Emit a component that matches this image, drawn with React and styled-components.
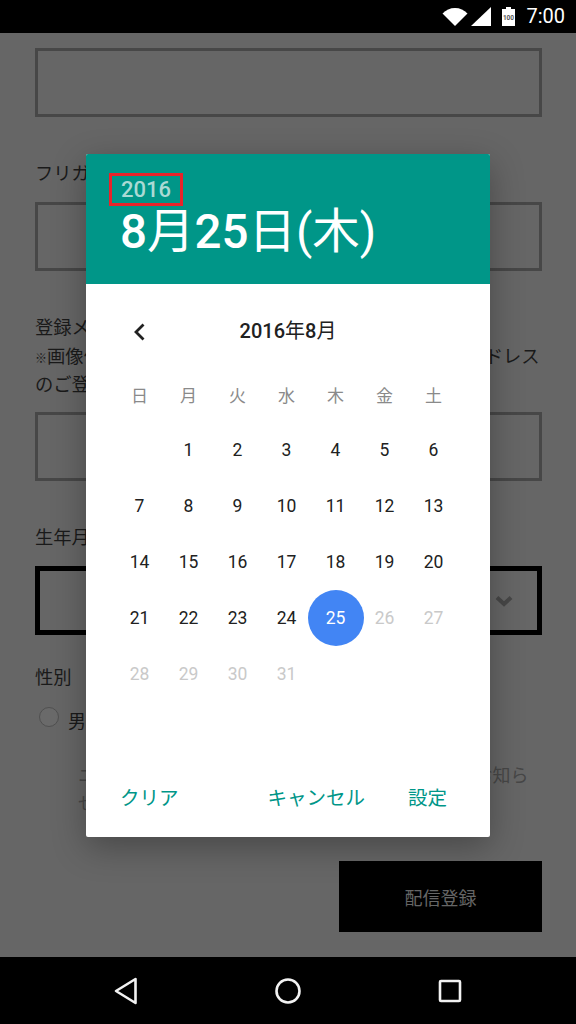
import React from 'react';
import styled, { createGlobalStyle } from 'styled-components';

const GlobalStyle = createGlobalStyle`
  html, body { margin: 0; padding: 0; background: #666; }
  body { font-family: Roboto, "Noto Sans CJK JP", sans-serif; }
`;

const Screen = styled.div`
  position: relative;
  width: 576px;
  height: 1024px;
  display: flex;
  flex-direction: column;
  overflow: hidden;
  background: #666;
`;

const StatusBar = styled.div`
  height: 33px;
  background: #000;
  display: flex;
  align-items: center;
  justify-content: flex-end;
  padding-right: 11px;
  color: #fff;
  flex: none;
`;

const StatusIcon = styled.svg`
  margin-left: ${p => p.$left || 0}px;
`;

const Clock = styled.span`
  font-size: 20px;
  margin-left: 11px;
  line-height: 33px;
`;

const Form = styled.div`
  flex: 1;
  padding: 15px 34px 0 35px;
  position: relative;
`;

const Field = styled.div`
  height: ${p => (p.$strong ? 59 : 63)}px;
  border: ${p => (p.$strong ? '5px solid #000' : '3px solid #474747')};
  margin-bottom: ${p => p.$gap}px;
  display: flex;
  align-items: center;
  justify-content: flex-end;
  padding-right: 24px;
`;

const Label = styled.div`
  font-size: 18.3px;
  line-height: 28.5px;
  height: 28.5px;
  color: #1a1a1a;
  white-space: nowrap;
  margin-bottom: ${p => p.$gap || 0}px;
`;

const NoteMark = styled.span`
  font-size: 12px;
  line-height: 0;
`;

const RadioRow = styled.div`
  display: flex;
  align-items: flex-start;
  margin: 14.5px 0 0 4px;
  height: 55px;
`;

const Radio = styled.span`
  width: 18px;
  height: 18px;
  border-radius: 50%;
  border: 1px solid #505050;
  background: #6a6a6a;
  margin-right: 9px;
`;

const RadioText = styled.span`
  font-size: 18px;
  line-height: 28px;
  margin-top: 1px;
  color: #1a1a1a;
`;

const Notice = styled.div`
  font-size: 18px;
  line-height: 28px;
  letter-spacing: 0.1px;
  color: #474747;
  margin-left: 43px;
  white-space: nowrap;
`;

const SubmitRow = styled.div`
  display: flex;
  justify-content: flex-end;
  margin-top: 43px;
`;

const Submit = styled.div`
  width: 203px;
  height: 71px;
  background: #000;
  color: #666;
  font-size: 18px;
  display: flex;
  align-items: center;
  justify-content: center;
`;

const NavBar = styled.div`
  height: 67px;
  flex: none;
  background: #000;
  display: flex;
  align-items: center;
  padding-left: 113px;
  gap: 136px;
`;

const Dialog = styled.div`
  position: absolute;
  left: 86px;
  top: 154px;
  width: 404px;
  height: 683px;
  background: #fff;
  border-radius: 2px;
  box-shadow: 0 10px 34px rgba(0, 0, 0, 0.3);
  display: flex;
  flex-direction: column;
  overflow: hidden;
`;

const DialogHeader = styled.div`
  height: 130px;
  flex: none;
  background: #009688;
  padding: 19px 0 0 23px;
  box-sizing: border-box;
`;

const YearBox = styled.div`
  width: 74px;
  height: 33px;
  box-sizing: border-box;
  border: 3px solid #e8232a;
  padding-left: 9px;
  color: #aadad4;
  font-size: 22px;
  font-weight: 500;
  line-height: 27px;
`;

const BigDate = styled.div`
  color: #fff;
  font-size: 47.5px;
  line-height: 52px;
  margin: 0 0 0 11px;
  white-space: nowrap;
`;

const Digits = styled.span`
  font-weight: 500;
`;

const MonthRow = styled.div`
  position: relative;
  height: 94px;
  flex: none;
  display: flex;
  justify-content: center;
  padding-top: 33px;
  box-sizing: border-box;
  font-size: 20px;
  line-height: 28px;
  color: #212121;
`;

const PrevButton = styled.span`
  position: absolute;
  left: 46px;
  top: 38px;
  display: flex;
`;

const Weekdays = styled.div`
  display: grid;
  grid-template-columns: repeat(7, 49px);
  padding-left: 29px;
  height: 44px;
  flex: none;
`;

const Weekday = styled.div`
  text-align: center;
  font-size: 17px;
  line-height: 36px;
  color: #8a8a8a;
`;

const Days = styled.div`
  display: grid;
  grid-template-columns: repeat(7, 49px);
  grid-auto-rows: 56px;
  padding-left: 29px;
  flex: none;
`;

const Day = styled.div`
  position: relative;
  display: flex;
  align-items: center;
  justify-content: center;
  font-size: 17.5px;
  color: ${p => (p.$selected ? '#fff' : p.$disabled ? '#c9c9c9' : '#212121')};
  &::before {
    content: '';
    display: ${p => (p.$selected ? 'block' : 'none')};
    position: absolute;
    left: -3.5px;
    top: 0;
    width: 56px;
    height: 56px;
    border-radius: 50%;
    background: #4285f4;
  }
`;

const DayNum = styled.span`
  position: relative;
`;

const Actions = styled.div`
  margin-top: auto;
  height: 58px;
  flex: none;
  display: flex;
  padding: 0 43px 0 34px;
  box-sizing: border-box;
  align-items: flex-start;
  font-size: 19.5px;
  line-height: 40px;
  color: #009688;
  white-space: nowrap;
`;

const ActionSpacer = styled.span`
  flex: 1;
`;

const ActionGap = styled.span`
  width: 43px;
`;

const SquareIcon = styled.svg`
  margin-left: 1px;
`;

const lastEnabled = 25;
const cells = [null];
for (let d = 1; d <= 31; d++) cells.push(d);

const weekdays = ['日', '月', '火', '水', '木', '金', '土'];

export default function App() {
  return (
    <Screen>
      <GlobalStyle />
      <StatusBar>
        <StatusIcon width="26" height="19" viewBox="0 0 26 19">
          <path d="M0.5 6.5C4 3 8 1 13 1s9 2 12.5 5.5L13 19z" fill="#fff" />
        </StatusIcon>
        <StatusIcon $left={3} width="20" height="19" viewBox="0 0 20 19">
          <path d="M20 0v19H0z" fill="#fff" />
        </StatusIcon>
        <StatusIcon $left={11} width="13" height="19" viewBox="0 0 13 19">
          <path d="M4 0h5v2h4v17H0V2h4z" fill="#fff" />
          <text x="6.5" y="12.5" fontSize="6.5" fontWeight="700" textAnchor="middle" fill="#555" fontFamily="Roboto">100</text>
        </StatusIcon>
        <Clock>7:00</Clock>
      </StatusBar>

      <Form>
        <Field $gap={43} />
        <Label $gap={13.5}>フリガナ</Label>
        <Field $gap={43} />
        <Label>登録メールアドレス</Label>
        <Label><NoteMark>※</NoteMark>画像付きメールを受信可能なスマートフォンメールアドレス</Label>
        <Label $gap={12.5}>のご登録をお願いします</Label>
        <Field $gap={43} />
        <Label $gap={13.5}>生年月日</Label>
        <Field $strong $gap={29}>
          <svg width="18" height="12" viewBox="0 0 18 12">
            <path d="M2 2.5l7 6.5 7-6.5" fill="none" stroke="#474747" strokeWidth="4" />
          </svg>
        </Field>
        <Label>性別</Label>
        <RadioRow>
          <Radio />
          <RadioText>男性</RadioText>
        </RadioRow>
        <Notice>ニュースレターや最新のキャンペーン情報などのお知ら</Notice>
        <Notice>せを受け取る</Notice>
        <SubmitRow>
          <Submit>配信登録</Submit>
        </SubmitRow>
      </Form>

      <NavBar>
        <svg width="26" height="28" viewBox="0 0 26 28">
          <path d="M22.5 2v24L3 14z" fill="none" stroke="#f2f2f2" strokeWidth="2.6" strokeLinejoin="round" />
        </svg>
        <svg width="26" height="26" viewBox="0 0 26 26">
          <circle cx="13" cy="13" r="11.5" fill="none" stroke="#f2f2f2" strokeWidth="2.6" />
        </svg>
        <SquareIcon width="24" height="24" viewBox="0 0 24 24">
          <rect x="2" y="2" width="20" height="20" rx="1" fill="none" stroke="#f2f2f2" strokeWidth="2.6" />
        </SquareIcon>
      </NavBar>

      <Dialog>
        <DialogHeader>
          <YearBox>2016</YearBox>
          <BigDate><Digits>8</Digits>月<Digits>25</Digits>日(木)</BigDate>
        </DialogHeader>
        <MonthRow>
          <PrevButton>
            <svg width="16" height="20" viewBox="0 0 16 20">
              <path d="M11.5 2.5L4 10l7.5 7.5" fill="none" stroke="#212121" strokeWidth="2.8" />
            </svg>
          </PrevButton>
          <span><Digits>2016</Digits>年<Digits>8</Digits>月</span>
        </MonthRow>
        <Weekdays>
          {weekdays.map(w => (
            <Weekday key={w}>{w}</Weekday>
          ))}
        </Weekdays>
        <Days>
          {cells.map((d, i) => (
            <Day key={i} $selected={d === lastEnabled} $disabled={d > lastEnabled}>
              {d && <DayNum>{d}</DayNum>}
            </Day>
          ))}
        </Days>
        <Actions>
          <span>クリア</span>
          <ActionSpacer />
          <span>キャンセル</span>
          <ActionGap />
          <span>設定</span>
        </Actions>
      </Dialog>
    </Screen>
  );
}
